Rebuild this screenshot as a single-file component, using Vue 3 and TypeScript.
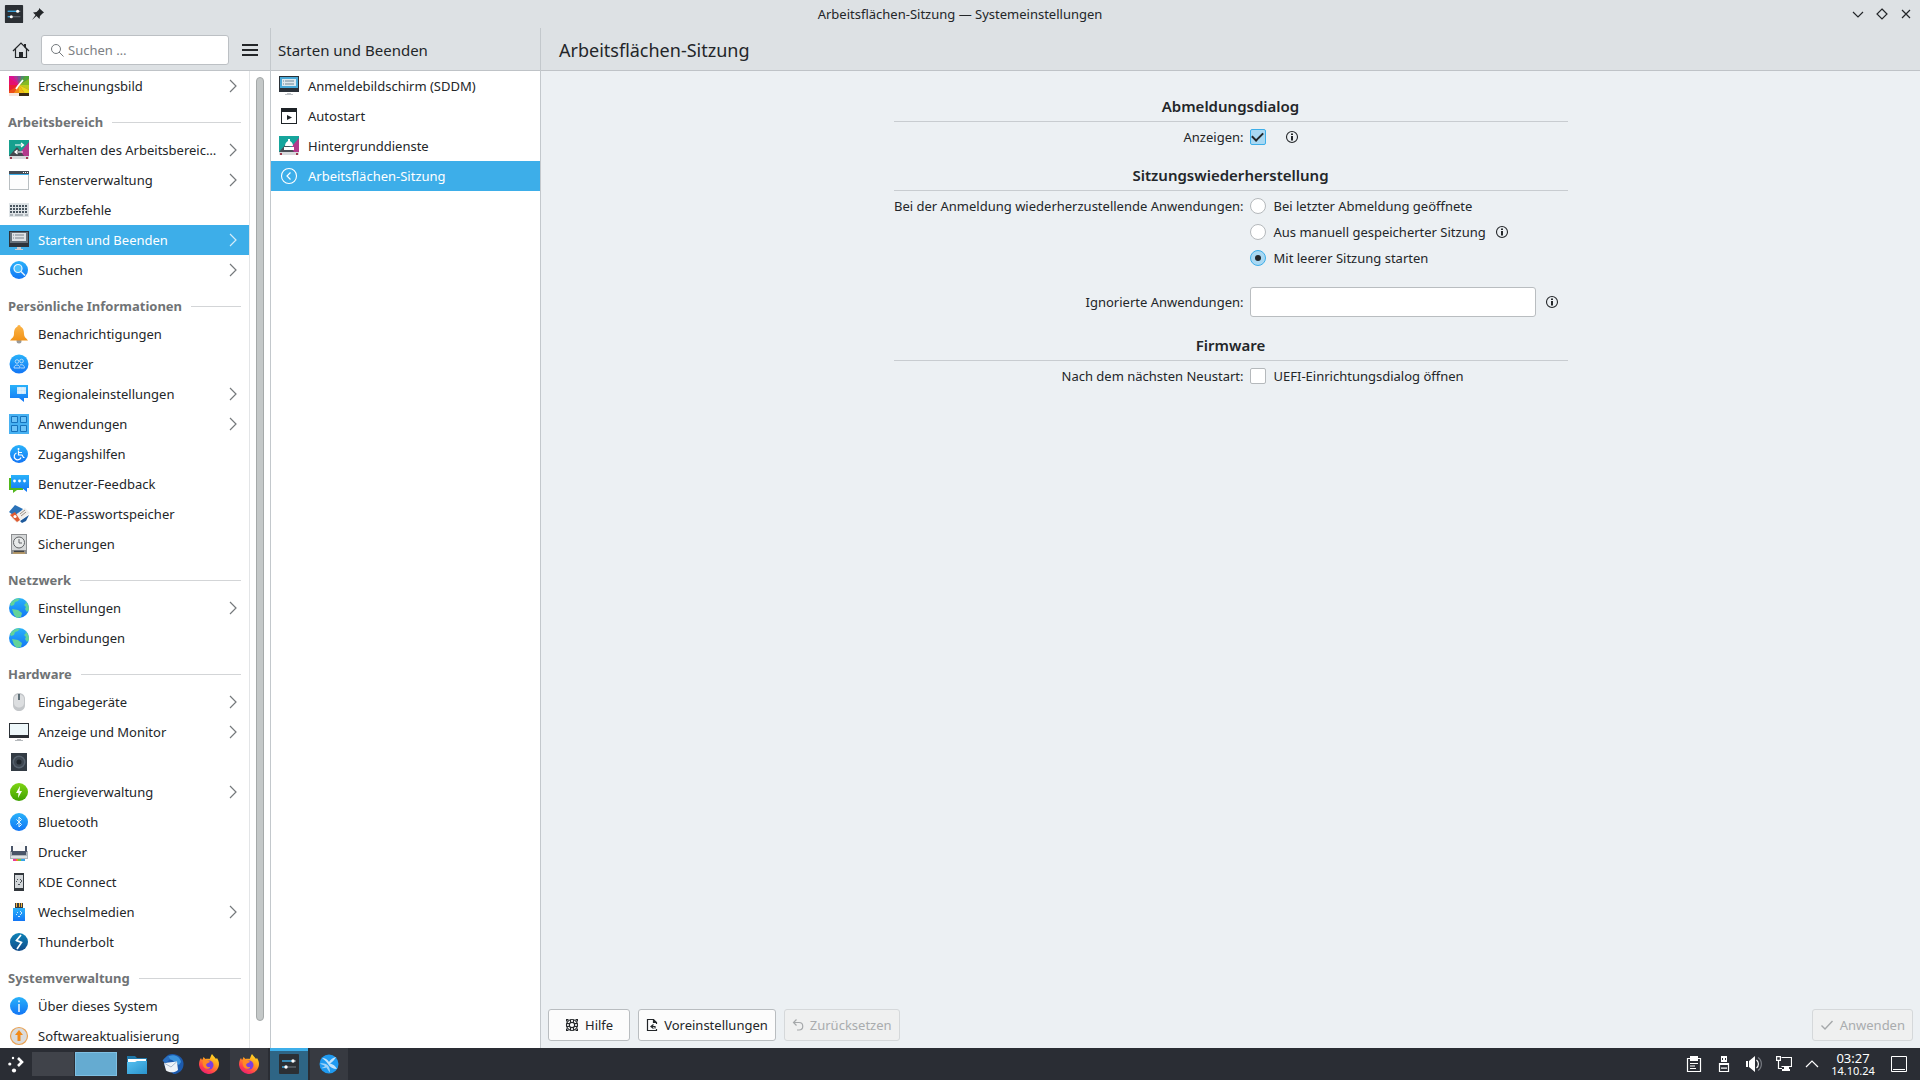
<script setup lang="ts">
import { ref } from 'vue'

interface Entry {
  icon: string
  label: string
  sub?: boolean
  active?: boolean
}
interface Group {
  title?: string
  entries: Entry[]
}

const groups: Group[] = [
  { entries: [{ icon: 'appearance', label: 'Erscheinungsbild', sub: true }] },
  {
    title: 'Arbeitsbereich',
    entries: [
      { icon: 'workspace', label: 'Verhalten des Arbeitsbereic…', sub: true },
      { icon: 'window', label: 'Fensterverwaltung', sub: true },
      { icon: 'keyboard', label: 'Kurzbefehle' },
      { icon: 'startup', label: 'Starten und Beenden', sub: true, active: true },
      { icon: 'search-round', label: 'Suchen', sub: true },
    ],
  },
  {
    title: 'Persönliche Informationen',
    entries: [
      { icon: 'bell', label: 'Benachrichtigungen' },
      { icon: 'users', label: 'Benutzer' },
      { icon: 'region', label: 'Regionaleinstellungen', sub: true },
      { icon: 'apps', label: 'Anwendungen', sub: true },
      { icon: 'access', label: 'Zugangshilfen' },
      { icon: 'feedback', label: 'Benutzer-Feedback' },
      { icon: 'wallet', label: 'KDE-Passwortspeicher' },
      { icon: 'backup', label: 'Sicherungen' },
    ],
  },
  {
    title: 'Netzwerk',
    entries: [
      { icon: 'globe', label: 'Einstellungen', sub: true },
      { icon: 'globe', label: 'Verbindungen' },
    ],
  },
  {
    title: 'Hardware',
    entries: [
      { icon: 'mouse', label: 'Eingabegeräte', sub: true },
      { icon: 'monitor', label: 'Anzeige und Monitor', sub: true },
      { icon: 'audio', label: 'Audio' },
      { icon: 'energy', label: 'Energieverwaltung', sub: true },
      { icon: 'bluetooth', label: 'Bluetooth' },
      { icon: 'printer', label: 'Drucker' },
      { icon: 'phone', label: 'KDE Connect' },
      { icon: 'usb', label: 'Wechselmedien', sub: true },
      { icon: 'thunderbolt', label: 'Thunderbolt' },
    ],
  },
  {
    title: 'Systemverwaltung',
    entries: [
      { icon: 'info-round', label: 'Über dieses System' },
      { icon: 'update', label: 'Softwareaktualisierung' },
    ],
  },
]

const pages: Entry[] = [
  { icon: 'sddm', label: 'Anmeldebildschirm (SDDM)' },
  { icon: 'autostart', label: 'Autostart' },
  { icon: 'services', label: 'Hintergrunddienste' },
  { icon: 'session', label: 'Arbeitsflächen-Sitzung', active: true },
]

const query = ref('')
const showDialog = ref(true)
const restore = ref('empty')
const ignored = ref('')
const firmware = ref(false)
</script>

<template>
  <div class="desktop">
    <svg class="symbols" aria-hidden="true">
      <defs>
        <linearGradient id="blue" x1="0" y1="0" x2="0" y2="1">
          <stop offset="0" stop-color="#29b2fa" /><stop offset="1" stop-color="#1275f5" />
        </linearGradient>
        <linearGradient id="deep" x1="0" y1="0" x2="0" y2="1">
          <stop offset="0" stop-color="#0e83b8" /><stop offset="1" stop-color="#124b8a" />
        </linearGradient>
        <linearGradient id="green" x1="0" y1="0" x2="0" y2="1">
          <stop offset="0" stop-color="#7fd513" /><stop offset="1" stop-color="#3fa102" />
        </linearGradient>
        <linearGradient id="gold" x1="0" y1="0" x2="0" y2="1">
          <stop offset="0" stop-color="#fbb54a" /><stop offset="1" stop-color="#f29317" />
        </linearGradient>
        <linearGradient id="fox" x1="0.8" y1="0" x2="0.2" y2="1">
          <stop offset="0" stop-color="#ffe226" /><stop offset="0.4" stop-color="#ff9a1f" />
          <stop offset="0.75" stop-color="#ff3d4f" /><stop offset="1" stop-color="#e21a7b" />
        </linearGradient>
        <linearGradient id="folder" x1="0" y1="0" x2="1" y2="1">
          <stop offset="0" stop-color="#56c0f0" /><stop offset="1" stop-color="#2a93cc" />
        </linearGradient>
      </defs>
      <symbol id="i-settings" viewBox="0 0 22 22">
        <rect x="1" y="1" width="20" height="20" rx="1" fill="#2b2f34" />
        <path d="M4 8h10" stroke="#3daee9" stroke-width="1.4" /><path d="M14 8h4" stroke="#8a9199" stroke-width="1.2" />
        <path d="M4 14h4" stroke="#3daee9" stroke-width="1.4" /><path d="M8 14h10" stroke="#69717a" stroke-width="1.2" />
        <circle cx="15" cy="8" r="1.7" fill="#fff" /><circle cx="8" cy="14" r="1.7" fill="#fff" />
      </symbol>
      <symbol id="i-appearance" viewBox="0 0 22 22">
        <path d="M1 1h20v18H1z" fill="#d6452f" />
        <path d="M11 10 1 10V3z" fill="#e5106f" /><path d="M11 10 1 3V1h4z" fill="#dd0f93" /><path d="M11 10 5 1h4z" fill="#b0309c" />
        <path d="M11 10 9 1h4z" fill="#79559a" /><path d="M11 10 13 1h4z" fill="#4b8f6b" /><path d="M11 10 17 1h4v3z" fill="#4da63a" />
        <path d="M11 10 21 4v6z" fill="#84bb25" /><path d="M11 10h10v5z" fill="#bccb1e" /><path d="M11 10 21 15v4h-4z" fill="#e8d91a" />
        <path d="m11 10 6 9h-6z" fill="#f2bd16" /><path d="M11 10v9H5z" fill="#f18a15" /><path d="M11 10 5 19H1v-3z" fill="#ee4e16" /><path d="M11 10 1 16v-6z" fill="#ea1f33" />
        <path d="m8 14 2-3 5-6" stroke="#fff" stroke-width="1.8" fill="none" />
        <path d="M1 18h20v3H1z" fill="#f8e6dc" /><path d="M11 18h10v3H11z" fill="#3b2c14" />
      </symbol>
      <symbol id="i-workspace" viewBox="0 0 22 22">
        <path d="M1 1h20v18H1z" fill="#16a08e" /><path d="M21 3v14H9z" fill="#b23a8c" /><path d="M1 17 9 8l7 9z" fill="#454a50" />
        <path d="M7 6h8M13 4l2.500 2-2.500 2M7 13h8M9.500 11 7 13l2.500 2" stroke="#fff" stroke-width="1.200" fill="none" />
        <path d="M1 17h20v3H1z" fill="#d8dadd" /><path d="M2 18h2v2H2zM18 18h2v2h-2z" fill="#9b3b4d" />
      </symbol>
      <symbol id="i-services" viewBox="0 0 22 22">
        <path d="M1 1h20v18H1z" fill="#16a59c" /><path d="M21 3v14H9z" fill="#b23a8c" /><path d="M1 17 9 8l7 9z" fill="#4a4f57" />
        <path d="M7 11a4 5 0 0 1 8 0zM10 4h2v3h-2zM6 12h10v3H6z" fill="#fff" />
        <path d="M1 17h20v3H1z" fill="#d8dadd" /><path d="M2 18h2v2H2zM18 18h2v2h-2z" fill="#9b3b4d" />
      </symbol>
      <symbol id="i-window" viewBox="0 0 22 22">
        <rect x="1.500" y="2.500" width="19" height="18" fill="#fdfdfd" stroke="#b9bfc2" /><path d="M1 2h20v3H1z" fill="#454d56" /><path d="M1 5h20v1H1z" fill="#3daee9" />
        <path d="M15 3h1v1h-1zM17 3h1v1h-1zM19 3h1v1h-1z" fill="#fff" />
      </symbol>
      <symbol id="i-keyboard" viewBox="0 0 22 22">
        <path d="M1 4h20v14H1z" fill="#dfe4e7" /><path d="M2 7h18M2 10h18M2 13h18" stroke="#4b5761" stroke-width="2" stroke-dasharray="2 1" />
        <path d="M2 16h3M7 16h8M17 16h3" stroke="#7c868e" stroke-width="1" />
      </symbol>
      <symbol id="i-startup" viewBox="0 0 22 22">
        <path d="M1 2h20v16H1z" fill="#2c333b" /><path d="M2 3h18v11H2z" fill="#66717a" /><path d="M4 4h14v8H4z" fill="#dfe3e6" />
        <path d="M5 6h1M7 6h9M5 9h1M7 9h9" stroke="#7a848d" stroke-width="1" /><path d="M9 18h4v2h2v1H7v-1h2z" fill="#c9ccd0" />
      </symbol>
      <symbol id="i-sddm" viewBox="0 0 22 22">
        <path d="M1 1h20v16H1z" fill="#2a3138" /><path d="M2 2h18v11H2z" fill="#49a9d8" /><path d="M4 4h14v7H4z" fill="#dfe9ee" />
        <path d="M5 6h1M7 6h9M5 9h1M7 9h9" stroke="#6e8796" stroke-width="1" /><path d="M9 18h4v1h2v1H7v-1h2z" fill="#c0c4c8" />
      </symbol>
      <symbol id="i-autostart" viewBox="0 0 22 22">
        <rect x="3.500" y="3.500" width="15" height="15" fill="#fff" stroke="#1d2226" /><path d="M3 3h16v4H3z" fill="#1d2226" /><path d="m9 10 5 2.500L9 15z" fill="#1d2226" />
      </symbol>
      <symbol id="i-session" viewBox="0 0 22 22">
        <circle cx="11" cy="11" r="7.500" fill="none" stroke="#fff" stroke-width="1.100" /><path d="M12.500 7.500 9 11l3.500 3.500" fill="none" stroke="#fff" stroke-width="1.200" />
      </symbol>
      <symbol id="i-search-round" viewBox="0 0 22 22">
        <circle cx="11" cy="11" r="9" fill="url(#blue)" /><circle cx="10" cy="9.500" r="4" fill="#4cc0fb" stroke="#e8f5ff" stroke-width="1.200" /><path d="m13 12.500 4 4" stroke="#e8f5ff" stroke-width="1.500" />
      </symbol>
      <symbol id="i-bell" viewBox="0 0 22 22">
        <circle cx="11" cy="18" r="2.500" fill="#9a9a9a" /><path d="M11 2c1 0 1.500.8 1.700 1.800C15.500 5 16 8 16 11c0 3 2 4 4 6.500H2C4 15 6 14 6 11c0-3 .5-6 3.300-7.200C9.500 2.800 10 2 11 2z" fill="url(#gold)" />
      </symbol>
      <symbol id="i-users" viewBox="0 0 22 22">
        <circle cx="11" cy="11" r="9.500" fill="url(#blue)" /><g fill="none" stroke="#bfe0fb" stroke-width=".9"><circle cx="9" cy="8.500" r="1.800" /><circle cx="13.500" cy="8" r="1.800" /><path d="M6 15c0-4 6-4 6 0zM12 12c3-1 4.500 1 4.500 3h-4" /></g>
      </symbol>
      <symbol id="i-region" viewBox="0 0 22 22">
        <path d="M2 2h18v13h-4v4l-5-4H2z" fill="url(#blue)" /><path d="M9 4h9v7H9z" fill="#c6e5fb" /><path d="M9 6h9M9 9h9M12 4v7M15 4v7" stroke="#e9f6ff" stroke-width=".8" />
      </symbol>
      <symbol id="i-apps" viewBox="0 0 22 22">
        <path d="M1 1h20v20H1z" fill="#47b1f2" /><g fill="#6cc2f6" stroke="#1673bd"><path d="M3.500 3.500h6v6h-6zM12.500 3.500h6v6h-6zM3.500 12.500h6v6h-6zM12.500 12.500h6v6h-6z" /></g>
      </symbol>
      <symbol id="i-access" viewBox="0 0 22 22">
        <circle cx="11" cy="11" r="9" fill="url(#blue)" /><g fill="none" stroke="#fff" stroke-width="1.200"><path d="M10.500 7.500v4.500h3.500l1.500 2.500h1M8.500 10a3.500 3.500 0 1 0 4.500 4.500M10.500 9.500h3.500" /></g><circle cx="10.500" cy="6" r="1" fill="#fff" />
      </symbol>
      <symbol id="i-feedback" viewBox="0 0 22 22">
        <path d="M1 5h14v12H9l-4 3v-3H1z" fill="#52b81c" /><path d="M3 2h18v13h-2v4l-5-4H3z" fill="url(#blue)" />
        <g fill="#fff"><circle cx="6.500" cy="8" r="1.400" /><circle cx="11.500" cy="8" r="1.400" /><circle cx="16.500" cy="8" r="1.400" /></g>
      </symbol>
      <symbol id="i-wallet" viewBox="0 0 22 22">
        <path d="m1 9 6-7 8 4-6 9z" fill="#2a72b8" /><path d="m12 18 9-6-3 6-4 2z" fill="#1d599b" /><path d="m3 15 14-10 5 5-13 10z" fill="#f1efec" /><path d="m2 12 5-3 5 8-3 2z" fill="#de5b31" /><circle cx="7" cy="13.500" r="1.600" fill="#fff" /><path d="m12 11 5-4M13 13l5-4" stroke="#9a8f86" />
      </symbol>
      <symbol id="i-backup" viewBox="0 0 22 22">
        <path d="M3 1h16v20H3z" fill="#8d8f91" /><path d="M4 2h14v15H4z" fill="#d6d8d9" /><circle cx="11" cy="9.500" r="5.500" fill="#e8eaea" stroke="#606366" /><path d="M11 6v4h3" fill="none" stroke="#606366" /><path d="M6 18.500h10" stroke="#3f4346" stroke-width="1.500" /><path d="M5 20h12" stroke="#dca447" />
      </symbol>
      <symbol id="i-globe" viewBox="0 0 22 22">
        <circle cx="11" cy="11" r="10" fill="url(#blue)" /><path d="M2 7c2-4 6-6 10-5.500L10 4 7 5 6 8l-3 1zM17 4c3 2 4.500 6 4 9l-2 2-2-3 1-2-2-2 2-2zM4 12l6 1 4 3-1 4-4 1-3-3z" fill="#63d39a" />
      </symbol>
      <symbol id="i-mouse" viewBox="0 0 22 22">
        <path d="M5 8c0-8 12-8 12 0v6c0 8-12 8-12 0z" fill="#c3c6c9" /><path d="M6 8c0-6 10-6 10 0v4c0 6-10 6-10 0z" fill="#dcdee0" /><path d="M11 3v6" stroke="#5f7078" stroke-width="2" />
      </symbol>
      <symbol id="i-monitor" viewBox="0 0 22 22">
        <path d="M1 2h20v15H1z" fill="#2b3036" /><path d="M2 3h18v11H2z" fill="#eef8fb" /><path d="M9 18h4v1h2v1H7v-1h2z" fill="#b6babd" />
      </symbol>
      <symbol id="i-audio" viewBox="0 0 22 22">
        <path d="M3 2h16v18H3z" fill="#333b44" /><circle cx="11" cy="11" r="6.500" fill="#56616d" /><circle cx="11" cy="11" r="5" fill="#3e4751" /><circle cx="11" cy="11" r="2.500" fill="#1f252b" />
      </symbol>
      <symbol id="i-energy" viewBox="0 0 22 22">
        <circle cx="11" cy="11" r="9" fill="url(#green)" /><path d="m12 5-4 7h2.500l-.5 5 4-7H11.500z" fill="#fff" />
      </symbol>
      <symbol id="i-bluetooth" viewBox="0 0 22 22">
        <circle cx="11" cy="11" r="9" fill="url(#blue)" /><path d="m8.500 8.500 5 5-2.500 2.500V6l2.500 2.500-5 5" fill="none" stroke="#e5f4ff" stroke-width="1" />
      </symbol>
      <symbol id="i-printer" viewBox="0 0 22 22">
        <path d="M5 1h12v9H5z" fill="#fbfbfb" /><path d="M2 10h18v8H2z" fill="#aeb5bb" /><path d="M3 5h2v6H3zM17 5h2v6h-2z" fill="#4a5568" /><path d="M4 10h14v4H4z" fill="#4a5568" /><path d="M3 15h16v2H3z" fill="#dfe2e4" />
        <path d="M5 18h3v2H5z" fill="#e93a9a" /><path d="M8 18h2v2H8z" fill="#f57f20" /><path d="M10 18h3v2h-3z" fill="#72c43c" /><path d="M13 18h4v2h-4z" fill="#35a4e8" />
      </symbol>
      <symbol id="i-phone" viewBox="0 0 22 22">
        <path d="M6 2h10v18H6z" fill="#33383d" /><path d="M7 4h8v13H7z" fill="#d3d7da" /><path d="m12 8 2 2-2 2" fill="none" stroke="#4a5156" /><path d="M9 8h1v1H9zM8 10h1v1H8zM10 13h2v1h-2z" fill="#4a5156" />
      </symbol>
      <symbol id="i-usb" viewBox="0 0 22 22">
        <path d="M7 2h8v5H7z" fill="#3a3b3d" /><path d="M8 2h1v4H8zM11 2h1v4h-1zM13 2h1v4h-1z" fill="#f5b640" /><path d="M5 7h12v13H5z" fill="url(#blue)" /><path d="m12 10 2 2-2 2" fill="none" stroke="#cdeaff" /><path d="M9 11h1v1H9zM8 13h1v1H8zM10 15h2v1h-2z" fill="#cdeaff" />
      </symbol>
      <symbol id="i-thunderbolt" viewBox="0 0 22 22">
        <circle cx="11" cy="11" r="9" fill="url(#deep)" /><path d="m13 4-4.500 5.500 5 2L9 18M8 9.500l5.500 2" fill="none" stroke="#fff" stroke-width="1.700" />
      </symbol>
      <symbol id="i-info-round" viewBox="0 0 22 22">
        <circle cx="11" cy="11" r="9" fill="url(#blue)" /><path d="M10.300 9h1.400v8h-1.400zM10.300 5.500h1.400v1.800h-1.400z" fill="#fff" />
      </symbol>
      <symbol id="i-update" viewBox="0 0 22 22">
        <circle cx="11" cy="11" r="8.500" fill="#dadbdc" stroke="#e9a254" stroke-width="1.200" /><path d="m11 5 4 5h-2.500v6h-3v-6H7z" fill="#f28a18" />
      </symbol>
      <symbol id="i-info" viewBox="0 0 16 16">
        <circle cx="8" cy="8" r="5.500" fill="none" stroke="#232629" stroke-width="1.100" /><path d="M7 7h2v4.500H7zM7 4.500h2V6H7z" fill="#232629" />
      </symbol>
      <symbol id="i-chevron" viewBox="0 0 8 14">
        <path d="m1 1 6 6-6 6" fill="none" stroke="currentColor" stroke-width="1.200" />
      </symbol>
      <symbol id="i-firefox" viewBox="0 0 22 22">
        <path d="M14 1c1 2 3 3 4 5l1-1c2 3 2.500 6 1.500 9A10 10 0 0 1 1 12c0-3 .5-5 2-7l1 2c1-1 1-2 1.500-3l2 2c2-.5 3 0 4 0 1-1 1-3 2.500-5z" fill="url(#fox)" />
        <circle cx="11" cy="12" r="4.500" fill="#7a3fe0" /><path d="M5 7c3-.5 6 .5 7 2l-3 1.500c-2 1.500 0 4.500 3 3.500 1 2-5 3-6.500-.5C4.500 11 4.500 9 5 7z" fill="#ff8a24" />
      </symbol>
      <symbol id="i-files" viewBox="0 0 22 22">
        <path d="M1 3h8l2 2h10v15H1z" fill="#1e77a8" /><path d="M2 6h18v4H2z" fill="#fff" /><path d="M1 9h8l2-1h10v13H1z" fill="url(#folder)" />
      </symbol>
      <symbol id="i-mail" viewBox="0 0 22 22">
        <path d="M6 2c6-3 15 1 15.500 8 .5 6-4 11-10 11l-8-6C1 10 2 5 6 2z" fill="#1c5aad" /><path d="M4 5c5-5 14-3 15 4l-2 3-7-5z" fill="#3b94dd" />
        <path d="m2 10 13-1.500L16 17c-3 3-9 3-12 .5z" fill="#eef3f8" /><path d="m2 10 7 4 6-5.500" fill="none" stroke="#a9b9cc" /><path d="M.500 8C2 5 4 4 6 3l2 3-4 4z" fill="#2a6fc0" />
      </symbol>
      <symbol id="i-neon" viewBox="0 0 22 22">
        <circle cx="11" cy="11" r="9.500" fill="#1f9af0" />
        <path d="M4 5c3 0 5.500 1.500 7 4 1.500-2.500 4-4.500 7-5-1.500 3-3.500 5-6 6.500 3 .5 5.500 2.500 7 5.500-4 0-7-1.500-9-5C8 8 6 6.500 4 5z" fill="#c3e3fa" />
        <path d="M2 10.500c3-.5 6 0 8 2 1.500 2 2 4.500 2 7-1.500-1.500-2.500-3.500-3.500-5-2 .500-3.500 1-5 .5 1.500-.5 2.500-1 3.500-2-1.500-1-3.500-1.500-5-2.500z" fill="#9fd3f7" />
      </symbol>
    </svg>

    <header class="titlebar">
      <div class="title-left">
        <svg class="app-icon"><use href="#i-settings" /></svg>
        <svg width="14" height="14" viewBox="0 0 14 14"><path d="m8 1 5 4.500-1.500 1L9 9l-.5 3L5.500 9 1 13l3.500-5L2 5.500 5.500 5 8 2.500z" fill="#232629" /></svg>
      </div>
      <span class="title">Arbeitsflächen-Sitzung — Systemeinstellungen</span>
      <div class="title-right">
        <button aria-label="Minimieren"><svg width="12" height="12" viewBox="0 0 12 12"><path d="m1 4 5 5 5-5" /></svg></button>
        <button aria-label="Maximieren"><svg width="12" height="12" viewBox="0 0 12 12"><path d="m6 1 5 5-5 5-5-5z" /></svg></button>
        <button aria-label="Schließen"><svg width="12" height="12" viewBox="0 0 12 12"><path d="m2 2 8 8M10 2l-8 8" /></svg></button>
      </div>
    </header>

    <div class="window">
      <aside class="sidebar">
        <div class="toolbar">
          <button class="tool" aria-label="Startseite">
            <svg width="18" height="18" viewBox="0 0 18 18"><path d="M1 10 9 2l8 8M3.500 8v8.500h11V8" fill="none" stroke="#232629" stroke-width="1.200" /><path d="M7 11h4v6H7zM12 3h2v5l-2-2z" fill="#232629" /></svg>
          </button>
          <label class="search">
            <svg width="14" height="14" viewBox="0 0 14 14"><circle cx="6" cy="6" r="4.500" fill="none" stroke="#74797d" /><path d="m9 9 4.500 4.500" stroke="#74797d" /></svg>
            <input v-model="query" type="text" placeholder="Suchen …" aria-label="Suchen" />
          </label>
          <button class="tool" aria-label="Menü">
            <svg width="16" height="14" viewBox="0 0 16 14"><path d="M0 2h16M0 7h16M0 12h16" stroke="#232629" stroke-width="2" /></svg>
          </button>
        </div>
        <div class="nav-area">
          <nav class="nav">
            <section v-for="(group, i) in groups" :key="i">
              <h2 v-if="group.title">{{ group.title }}</h2>
              <a v-for="entry in group.entries" :key="entry.label" href="#" class="entry" :class="{ active: entry.active }" @click.prevent>
                <svg class="icon"><use :href="'#i-' + entry.icon" /></svg>
                <span>{{ entry.label }}</span>
                <svg v-if="entry.sub" class="chevron"><use href="#i-chevron" /></svg>
              </a>
            </section>
          </nav>
          <div class="track"><div class="thumb"></div></div>
        </div>
      </aside>

      <aside class="pages">
        <h2 class="column-title">Starten und Beenden</h2>
        <nav class="page-list">
          <a v-for="page in pages" :key="page.label" href="#" class="entry" :class="{ active: page.active }" @click.prevent>
            <svg class="icon"><use :href="'#i-' + page.icon" /></svg>
            <span>{{ page.label }}</span>
          </a>
        </nav>
      </aside>

      <main class="content">
        <h1 class="page-title">Arbeitsflächen-Sitzung</h1>
        <form class="form" @submit.prevent>
          <h3>Abmeldungsdialog</h3>
          <label class="name" for="show">Anzeigen:</label>
          <div class="field spaced">
            <input id="show" v-model="showDialog" type="checkbox" />
            <svg class="info"><use href="#i-info" /></svg>
          </div>

          <h3>Sitzungswiederherstellung</h3>
          <span id="restore" class="name">Bei der Anmeldung wiederherzustellende Anwendungen:</span>
          <div class="options" role="radiogroup" aria-labelledby="restore">
            <label class="field"><input v-model="restore" type="radio" name="restore" value="last" />Bei letzter Abmeldung geöffnete</label>
            <div class="field">
              <label class="field"><input v-model="restore" type="radio" name="restore" value="manual" />Aus manuell gespeicherter Sitzung</label>
              <svg class="info"><use href="#i-info" /></svg>
            </div>
            <label class="field"><input v-model="restore" type="radio" name="restore" value="empty" />Mit leerer Sitzung starten</label>
          </div>
          <label class="name tall" for="ignored">Ignorierte Anwendungen:</label>
          <div class="field tall">
            <input id="ignored" v-model="ignored" type="text" />
            <svg class="info"><use href="#i-info" /></svg>
          </div>

          <h3>Firmware</h3>
          <label class="name" for="firmware">Nach dem nächsten Neustart:</label>
          <label class="field"><input id="firmware" v-model="firmware" type="checkbox" />UEFI-Einrichtungsdialog öffnen</label>
        </form>
        <footer class="actions">
          <button class="action help">
            <svg width="14" height="14" viewBox="0 0 14 14"><g fill="none" stroke="#232629"><circle cx="7" cy="7" r="5.500" stroke-width="1.200" /><circle cx="7" cy="7" r="2.700" stroke-width="1.200" /><path d="M5.500 1.500v3M8.500 1.500v3M5.500 9.500v3M8.500 9.500v3M1.500 5.500h3M1.500 8.500h3M9.500 5.500h3M9.500 8.500h3" /></g><path d="M1 1h3L1 4zM13 1v3l-3-3zM1 13v-3l3 3zM13 13h-3l3-3z" fill="#232629" /></svg>
            Hilfe
          </button>
          <button class="action">
            <svg width="12" height="14" viewBox="0 0 12 14"><path d="M10.500 6V4.500L7.500 1.500h-6v11h9V11M7.500 1v3.500H11" fill="none" stroke="#232629" stroke-width="1.200" /><path d="M7.500 6.500 5 8.500l2.500 2M5.500 8.500H9v2" fill="none" stroke="#232629" stroke-width="1.200" /></svg>
            Voreinstellungen
          </button>
          <button class="action" disabled>
            <svg width="12" height="14" viewBox="0 0 12 14"><path d="M4.500 1.500 1.500 4.500l3 3M1.500 4.500H7c5 0 5 7.500 0 7.500H5" fill="none" stroke="#a5a8aa" stroke-width="1.200" /></svg>
            Zurücksetzen
          </button>
          <button class="action apply" disabled>
            <svg width="14" height="14" viewBox="0 0 14 14"><path d="m1.500 7.500 3.500 3.500 7.500-8" fill="none" stroke="#a5a8aa" stroke-width="1.400" /></svg>
            Anwenden
          </button>
        </footer>
      </main>
    </div>

    <footer class="panel">
      <button class="launcher" aria-label="Anwendungsstarter">
        <svg width="16" height="18" viewBox="0 0 16 18"><path d="m10 3 4 4-4 4" fill="none" stroke="#fff" stroke-width="2.600" /><g fill="#fff"><circle cx="5" cy="3" r="1.200" /><circle cx="1.800" cy="9" r="1.600" /><circle cx="6" cy="15.500" r="2.100" /></g></svg>
      </button>
      <div class="pager"><button aria-label="Arbeitsfläche 1"></button><button class="current" aria-label="Arbeitsfläche 2"></button></div>
      <button class="task" aria-label="Dateien"><svg class="icon"><use href="#i-files" /></svg></button>
      <button class="task" aria-label="E-Mail"><svg class="icon"><use href="#i-mail" /></svg></button>
      <button class="task" aria-label="Firefox"><svg class="icon"><use href="#i-firefox" /></svg></button>
      <div class="running">
        <button class="task open" aria-label="Firefox"><svg class="icon"><use href="#i-firefox" /></svg></button>
        <button class="task open focused" aria-label="Systemeinstellungen"><svg class="icon"><use href="#i-settings" /></svg></button>
        <button class="task open" aria-label="KDE"><svg class="icon"><use href="#i-neon" /></svg></button>
      </div>
      <div class="tray">
        <button aria-label="Zwischenablage"><svg width="16" height="18" viewBox="0 0 16 18"><path d="M1.500 3.500h13v13h-13z" fill="none" stroke="#fff" stroke-width="1.200" /><path d="M4 1h8v5H4z" fill="#fff" /><path d="M4 8.500h8M4 11h5M4 13.500h6" stroke="#fff" stroke-width="1.200" /></svg></button>
        <button aria-label="Geräte"><svg width="16" height="18" viewBox="0 0 16 18"><path d="M5 1h6v6H5z" fill="#fff" /><path d="M6.500 3v2M9.500 3v2" stroke="#2a2d34" /><path d="M3.500 8.500h9v8h-9z" fill="none" stroke="#fff" stroke-width="1.200" /><path d="M3 8h10v2H3zM5 12.500h6v1.200H5z" fill="#fff" /></svg></button>
        <button aria-label="Lautstärke"><svg width="16" height="18" viewBox="0 0 16 18"><path d="M0 6h2v6H0zM3 6l6-5v16l-6-5z" fill="#fff" /><path d="M10.500 5c2.500 2 2.500 6 0 8" fill="none" stroke="#fff" stroke-width="1.200" /><path d="M12 2.500c4.500 3 4.500 10 0 13" fill="none" stroke="#777b82" stroke-width="1.200" /></svg></button>
        <button aria-label="Netzwerk"><svg width="16" height="18" viewBox="0 0 16 18"><path d="M5.500 2.500h10v9h-10" fill="none" stroke="#fff" stroke-width="1.200" /><path d="M.6 1.600h3.800v3.800H.6zM2.500 5.500v8H6" fill="none" stroke="#fff" stroke-width="1.200" /><path d="M8 12h5v2h1v2H6v-2h2z" fill="#fff" /></svg></button>
        <button class="narrow" aria-label="Mehr"><svg width="14" height="8" viewBox="0 0 14 8"><path d="m1 7 6-6 6 6" fill="none" stroke="#fff" stroke-width="1.200" /></svg></button>
        <div class="clock"><span class="time">03:27</span><span class="date">14.10.24</span></div>
        <button class="show" aria-label="Arbeitsfläche anzeigen"><svg width="16" height="16" viewBox="0 0 16 16"><path d="M.5.500h15v15H.5z" fill="none" stroke="#fff" /><path d="M2 13.500h12" stroke="#fff" /></svg></button>
      </div>
    </footer>
  </div>
</template>

<style>
html,
body {
  margin: 0;
}
</style>

<style scoped>
.desktop {
  display: flex;
  flex-direction: column;
  height: 100vh;
  overflow: hidden;
  background: #ecf0f3;
  color: #232629;
  font: 13px/20px "Noto Sans", sans-serif;
}
.desktop * {
  box-sizing: border-box;
}
.symbols {
  position: absolute;
  width: 0;
  height: 0;
}
svg {
  display: block;
  flex: none;
}
h1,
h2,
h3 {
  margin: 0;
}
button {
  display: flex;
  align-items: center;
  justify-content: center;
  margin: 0;
  padding: 0;
  border: 0;
  background: none;
  color: inherit;
  font: inherit;
}
a {
  color: inherit;
  text-decoration: none;
}

.titlebar {
  display: grid;
  grid-template-columns: 1fr auto 1fr;
  align-items: center;
  flex: none;
  height: 28px;
  padding: 0 2px;
  background: #dde1e4;
}
.title-left {
  display: flex;
  align-items: center;
  gap: 7px;
  padding-left: 2px;
}
.app-icon {
  width: 20px;
  height: 20px;
}
.title-right {
  display: flex;
  justify-content: flex-end;
}
.title-right button {
  width: 24px;
}
.title-right path {
  fill: none;
  stroke: #232629;
  stroke-width: 1.2;
}

.window {
  display: flex;
  flex: 1;
  min-height: 0;
}
.sidebar,
.pages {
  display: flex;
  flex-direction: column;
  flex: none;
  width: 271px;
  border-right: 1px solid #c3c8cc;
  background: #fff;
}
.pages {
  width: 270px;
}
.toolbar,
.column-title,
.page-title {
  display: flex;
  align-items: center;
  flex: none;
  height: 43px;
  padding-top: 2px;
  border-bottom: 1px solid #bfc3c7;
  background: #dde1e4;
}
.tool {
  flex: none;
  width: 41px;
}
.search {
  display: flex;
  align-items: center;
  flex: 1;
  gap: 4px;
  min-width: 0;
  height: 30px;
  padding: 0 8px;
  border: 1px solid #bcc0c4;
  border-radius: 3px;
  background: #fff;
}
.search input {
  flex: 1;
  min-width: 0;
  padding: 0;
  border: 0;
  outline: 0;
  background: none;
  font: inherit;
}
.search input::placeholder {
  color: #7d8184;
  opacity: 1;
}
.column-title {
  padding-left: 7px;
  font-size: 15px;
  font-weight: 400;
}
.page-title {
  padding-left: 18px;
  font-size: 18px;
  font-weight: 400;
}

.nav-area {
  display: flex;
  flex: 1;
  min-height: 0;
}
.nav {
  flex: 1;
  overflow: hidden;
  border-right: 1px solid #e3e5e7;
}
.nav h2 {
  display: flex;
  align-items: center;
  gap: 9px;
  height: 34px;
  padding: 8px 8px 0;
  color: #707375;
  font-size: 13px;
  font-weight: 700;
}
.nav h2::after {
  content: "";
  flex: 1;
  height: 1px;
  background: #d3d5d7;
}
.entry {
  display: flex;
  align-items: center;
  gap: 8px;
  height: 30px;
  padding: 0 12px 0 8px;
  white-space: nowrap;
}
.page-list .entry {
  padding-left: 7px;
}
.entry span {
  flex: 1;
}
.entry.active {
  background: #3daee9;
  color: #fff;
}
.icon {
  width: 22px;
  height: 22px;
}
.chevron {
  width: 8px;
  height: 14px;
  color: #75797c;
}
.entry.active .chevron {
  color: #d5ecf9;
}
.track {
  flex: none;
  width: 20px;
  padding: 6px 6px 27px;
}
.thumb {
  height: 100%;
  border: 1px solid #a5a9a9;
  border-radius: 4px;
  background: #c4c8c8;
}

.content {
  display: flex;
  flex-direction: column;
  flex: 1;
  min-width: 0;
}
.form {
  display: grid;
  grid-template-columns: 350px 1fr;
  align-content: start;
  column-gap: 6px;
  flex: 1;
  width: 100%;
  max-width: 674px;
  margin: 0 auto;
  padding-top: 22px;
}
.form h3 {
  grid-column: 1 / -1;
  margin-bottom: 4px;
  padding-bottom: 2px;
  border-bottom: 1px solid #c8ccd0;
  font-size: 15px;
  font-weight: 600;
  line-height: 26px;
  text-align: center;
}
.form h3:not(:first-child) {
  margin-top: 14px;
}
.name {
  line-height: 22px;
  text-align: right;
  white-space: nowrap;
}
.name.tall {
  line-height: 30px;
}
.tall {
  margin-top: 18px;
  padding-bottom: 1px;
}
.options {
  display: flex;
  flex-direction: column;
  gap: 4px;
}
.field {
  display: flex;
  align-items: center;
  gap: 8px;
  min-height: 22px;
}
.field.spaced {
  gap: 18px;
}
.info {
  width: 16px;
  height: 16px;
}
input[type="checkbox"],
input[type="radio"] {
  appearance: none;
  display: grid;
  place-items: center;
  flex: none;
  width: 16px;
  height: 16px;
  margin: 0;
  border: 1px solid #b5b9bc;
  border-radius: 2px;
  background: #fff;
}
input[type="radio"] {
  border-radius: 50%;
}
input:checked {
  border-color: #3daee9;
  background: #a9d8f2;
}
input[type="radio"]:checked::before {
  content: "";
  width: 6px;
  height: 6px;
  border-radius: 50%;
  background: #232629;
}
input[type="checkbox"]:checked::before {
  content: "";
  width: 9px;
  height: 5px;
  margin-bottom: 3px;
  border: solid #232629;
  border-width: 0 0 2px 2px;
  transform: rotate(-45deg);
}
#ignored {
  width: 286px;
  height: 30px;
  padding: 0 6px;
  border: 1px solid #b9bdc0;
  border-radius: 3px;
  outline: 0;
  background: #fff;
  font: inherit;
}
.actions {
  display: flex;
  flex: none;
  gap: 8px;
  padding: 0 7px 7px;
}
.action {
  gap: 6px;
  height: 32px;
  padding: 0 7px;
  border: 1px solid #b9bdc0;
  border-radius: 3px;
  background: #fcfcfc;
}
.action.help {
  padding: 0 16px;
}
.action:disabled {
  border-color: #d5d8da;
  background: #eff0f0;
  color: #a9acae;
}
.action.apply {
  margin-left: auto;
}

.panel {
  display: flex;
  flex: none;
  height: 32px;
  background: #2a2d34;
  color: #fff;
}
.launcher {
  width: 32px;
}
.pager {
  display: flex;
  gap: 1px;
  padding: 4px 2px 4px 0;
}
.pager button {
  width: 42px;
  background: #40434a;
}
.pager .current {
  border: 1px solid #7fbfe2;
  background: #65abd1;
}
.task {
  width: 36px;
}
.running {
  display: flex;
  gap: 2px;
  padding-left: 3px;
}
.task.open {
  width: 38px;
  background: #373a41;
}
.task.open.focused {
  border-top: 3px solid #3daee9;
  padding-bottom: 3px;
  background: #2e6585;
}
.tray {
  display: flex;
  margin-left: auto;
  padding-right: 3px;
}
.tray button {
  width: 30px;
}
.tray .narrow {
  width: 26px;
}
.clock {
  display: flex;
  flex-direction: column;
  align-items: center;
  justify-content: center;
  width: 56px;
}
.time {
  line-height: 14px;
}
.date {
  font-size: 11px;
  line-height: 12px;
}
.tray .show {
  width: 36px;
}
</style>
